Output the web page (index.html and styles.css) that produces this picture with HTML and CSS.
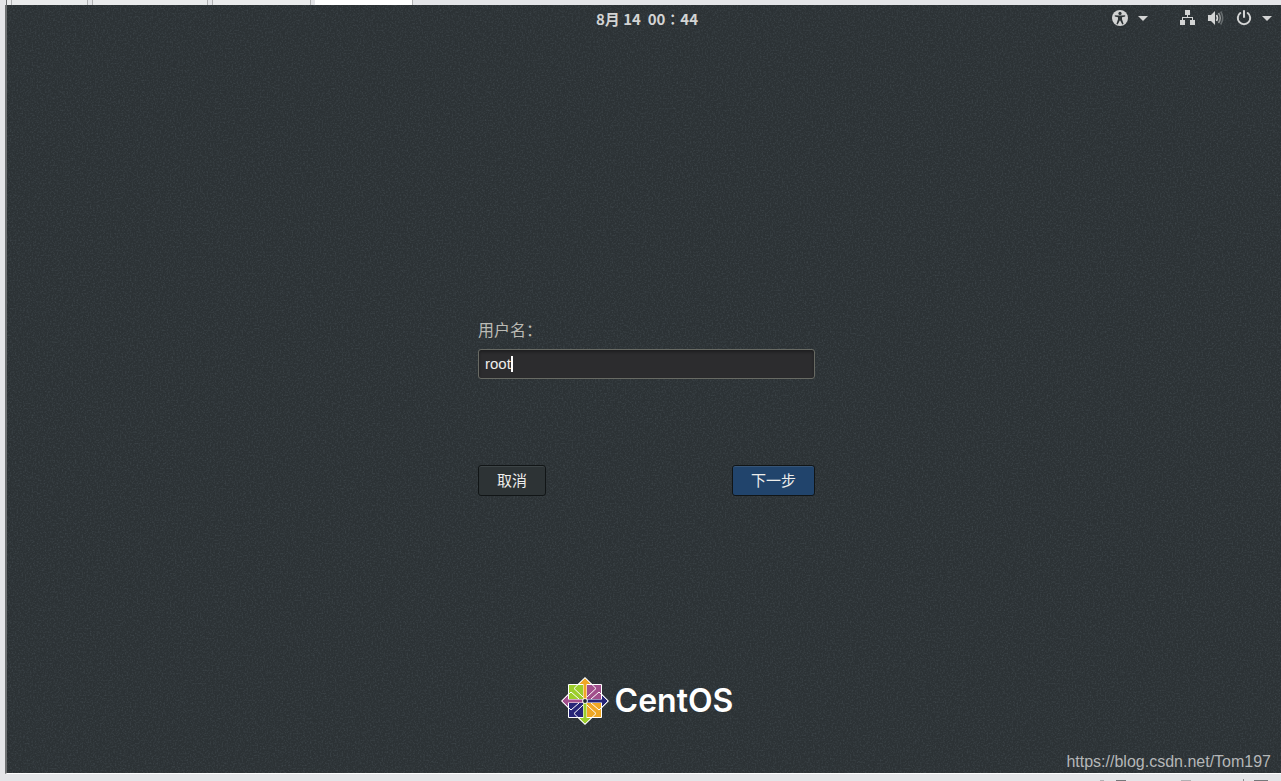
FILE: index.html
```html
<!DOCTYPE html>
<html lang="zh-CN">
<head>
<meta charset="utf-8">
<title>CentOS 登录</title>
<link rel="stylesheet" href="styles.css">
</head>
<body>
<div class="tabs">
  <span class="tab tab-stub"></span>
  <span class="tab tab-a"></span>
  <span class="tab tab-b"></span>
  <span class="tab tab-c"></span>
  <span class="tab tab-active"></span>
</div>
<div class="screen">
  <svg class="grain" aria-hidden="true">
    <filter id="noise" x="0" y="0" width="100%" height="100%" color-interpolation-filters="sRGB">
      <feTurbulence type="fractalNoise" baseFrequency="0.6" numOctaves="2" seed="4"/>
      <feColorMatrix values="0 0 0 0 0.5  0 0 0 0 0.56  0 0 0 0 0.6  1.4 0 0 0 -0.6"/>
    </filter>
    <rect width="100%" height="100%" filter="url(#noise)"/>
  </svg>
  <header class="bar">
    <time class="clock">8月 14&nbsp; 00∶44</time>
    <div class="status">
      <button class="menu" aria-label="辅助功能">
        <svg width="16" height="16" viewBox="0 0 16 16"><circle cx="8" cy="8" r="8" fill="#d3d4d4"/><g fill="#2e3436"><circle cx="8" cy="3.4" r="1.6"/><path d="M2.8 5.2 6.5 5.6h3l3.7-.4v1.4l-3.2.7v2l1.6 4.7-1.3.5L8.2 10.600h-.4l-2.100 3.900-1.300-.5L6 9.300v-2l-3.200-.7z"/></g></svg>
        <svg class="arrow" width="10" height="5" viewBox="0 0 10 5"><path d="M0 0h10L5 5z" fill="#d3d4d4"/></svg>
      </button>
      <button class="menu" aria-label="系统">
        <svg width="16" height="16" viewBox="0 0 16 16"><path d="M5 0h5v5H8v2h5v3h2v5h-5v-5h2V8H3v2h2v5H0v-5h2V7h5V5H5z" fill="#d3d4d4"/></svg>
        <svg width="16" height="16" viewBox="0 0 16 16"><path d="M0 5h3l4-4v14l-4-4H0z" fill="#d3d4d4"/><g fill="none" stroke-width="1.600"><path d="M8.500 5q2 3 0 6" stroke="#d3d4d4"/><path d="M10.500 3q3.500 5 0 10" stroke="#929696"/><path d="M12.700 1.500q4 6.500 0 13" stroke="#656b6d"/></g></svg>
        <svg width="16" height="16" viewBox="0 0 16 16"><g fill="none" stroke="#d3d4d4" stroke-width="2" stroke-linecap="round"><path d="M4.300 3a6.200 6.200 0 1 0 7.400 0M8 1v6"/></g></svg>
        <svg class="arrow" width="10" height="5" viewBox="0 0 10 5"><path d="M0 0h10L5 5z" fill="#d3d4d4"/></svg>
      </button>
    </div>
  </header>
  <main class="main">
    <form class="login">
      <label class="label" for="user">用户名：</label>
      <div class="field">
        <input class="input" id="user" type="text" value="root" autocomplete="off">
        <span class="caret"></span>
      </div>
      <div class="actions">
        <button class="button" type="button">取消</button>
        <button class="button primary" type="button">下一步</button>
      </div>
    </form>
  </main>
  <footer class="brand">
    <svg width="48" height="48" viewBox="-24 -24 48 48" aria-hidden="true">
      <g stroke="#fff" stroke-width="1">
        <path d="M0-23.300 7-16.500H-7z" fill="#efa724"/>
        <path d="M23.300 0 16.500 7V-7z" fill="#262577"/>
        <path d="M0 23.300 7 16.500H-7z" fill="#9ccd2a"/>
        <path d="M-23.300 0-16.500 7V-7z" fill="#a14f8c"/>
        <path d="M-16.500-16.500h15v15h-15z" fill="#9ccd2a"/>
        <path d="M1.500-16.500h15v15h-15z" fill="#a14f8c"/>
        <path d="M-16.500 1.500h15v15h-15z" fill="#262577"/>
        <path d="M1.500 1.500h15v15h-15z" fill="#efa724"/>
      </g>
      <path d="M-1.500-19h3V0h-3z" fill="#efa724"/>
      <path d="M0-1.500h19v3H0z" fill="#262577"/>
      <path d="M-1.500 0h3v19h-3z" fill="#9ccd2a"/>
      <path d="M-19-1.500H0v3h-19z" fill="#a14f8c"/>
      <path fill="none" stroke="#fff" stroke-width="1" d="M0-23.300 11-12.500 2-4M0-23.300-11-12.500-2-4M0 23.300 11 12.500 2 4M0 23.300-11 12.500-2 4M23.300 0 14-9 6-2M23.300 0 14 9 6 2M-23.300 0-14-9-6-2M-23.300 0-14 9-6 2"/>
      <circle r="2.800" fill="#fff"/><circle r="1.900" fill="#20282a"/>
    </svg>
    <span class="wordmark">CentOS</span>
  </footer>
  <span class="watermark">https://blog.csdn.net/Tom197</span>
</div>
<div class="strip">
  <span class="mark mark-light"></span><span class="mark"></span><span class="mark mark-mid"></span><span class="tick"></span><span class="mark mark-wide"></span>
</div>
</body>
</html>
```
FILE: styles.css
```css
* { box-sizing: border-box; }
body {
  margin: 0;
  height: 100vh;
  display: flex;
  flex-direction: column;
  overflow: hidden;
  background: #e4e5e8;
  font-family: "Noto Sans", "Noto Sans CJK SC", sans-serif;
}
button, input { font: inherit; margin: 0; }
.tabs {
  display: flex;
  height: 5px;
  gap: 4px;
  margin-left: 6px;
}
.tab { background: #eaebec; border: solid #b0b1b2; border-width: 0 1px; }
.tab-stub { width: 6px; margin-right: -4px; border-left-color: #6d7072; }
.tab-a { width: 76px; border-left: 0; }
.tab-b { width: 116px; }
.tab-c { width: 99px; }
.tab-active { width: 98px; background: #fff; border-left: 0; }
.screen {
  position: relative;
  flex: 1;
  display: flex;
  flex-direction: column;
  margin-left: 5px;
  border-left: 2px solid #6d7072;
  border-bottom: 1px solid #fff;
  background: #2c3235;
}
.grain { position: absolute; inset: 0; width: 100%; height: 100%; opacity: 0.3; }
.bar, .main, .brand { position: relative; }
.bar {
  display: grid;
  grid-template-columns: 1fr auto 1fr;
  align-items: center;
  height: 26px;
  padding: 0 9px 0 15px;
}
.clock {
  grid-column: 2;
  padding-top: 2px;
  color: #d3d4d4;
  font: 700 15px/20px "Noto Sans CJK SC", sans-serif;
}
.status { display: flex; justify-content: flex-end; gap: 32px; }
.menu {
  display: flex;
  align-items: center;
  gap: 12px;
  padding: 0;
  border: 0;
  background: none;
}
.menu svg { display: block; }
.menu .arrow { margin-left: -2px; }
.main {
  flex: 1;
  display: flex;
  align-items: center;
  justify-content: center;
  padding: 104px 0 0 5px;
}
.login { width: 337px; }
.label {
  display: block;
  margin-bottom: 8px;
  color: #bbbbb5;
  font: 16px/24px "Noto Sans CJK SC", sans-serif;
}
.field { position: relative; }
.input {
  display: block;
  width: 100%;
  height: 30px;
  padding: 0 6px;
  border: 1px solid #686a63;
  border-radius: 3px;
  outline: 0;
  background: #2c2c2e;
  box-shadow: inset 0 2px 3px #1e1e20;
  color: #eeeeec;
  font: 15px/20px "Liberation Sans", sans-serif;
}
.caret {
  position: absolute;
  left: 33px;
  top: 7px;
  width: 2px;
  height: 16px;
  background: #fff;
}
.actions {
  display: flex;
  justify-content: space-between;
  margin-top: 86px;
}
.button {
  height: 31px;
  padding: 0 18px;
  border: 1px solid #111516;
  border-radius: 3px;
  background: #2d3335;
  box-shadow: inset 0 1px #3d4446;
  color: #eeeeec;
  font: 15px/22px "Noto Sans CJK SC", sans-serif;
}
.primary { background: #21446c; box-shadow: inset 0 1px #375577; }
.brand {
  display: flex;
  align-items: center;
  justify-content: center;
  gap: 6px;
  padding: 0 0 48px 6px;
}
.wordmark {
  color: #fff;
  font: 600 32px/48px Inter, sans-serif;
}
.watermark {
  position: absolute;
  right: 10px;
  bottom: 2px;
  color: #b5b7b8;
  font: 16px/18px "Liberation Sans", sans-serif;
}
.strip {
  display: flex;
  align-items: flex-end;
  justify-content: flex-end;
  height: 7px;
  padding-right: 13px;
}
.mark { width: 10px; height: 1px; margin-right: 55px; background: #77797c; }
.mark-light { width: 4px; margin-right: 12px; background: #b0b1b4; }
.mark-mid { margin-right: 52px; background: #b0b1b4; }
.tick { width: 1px; height: 2px; margin-right: 10px; background: #8b8d90; }
.mark-wide { width: 14px; margin-right: 0; }
```
